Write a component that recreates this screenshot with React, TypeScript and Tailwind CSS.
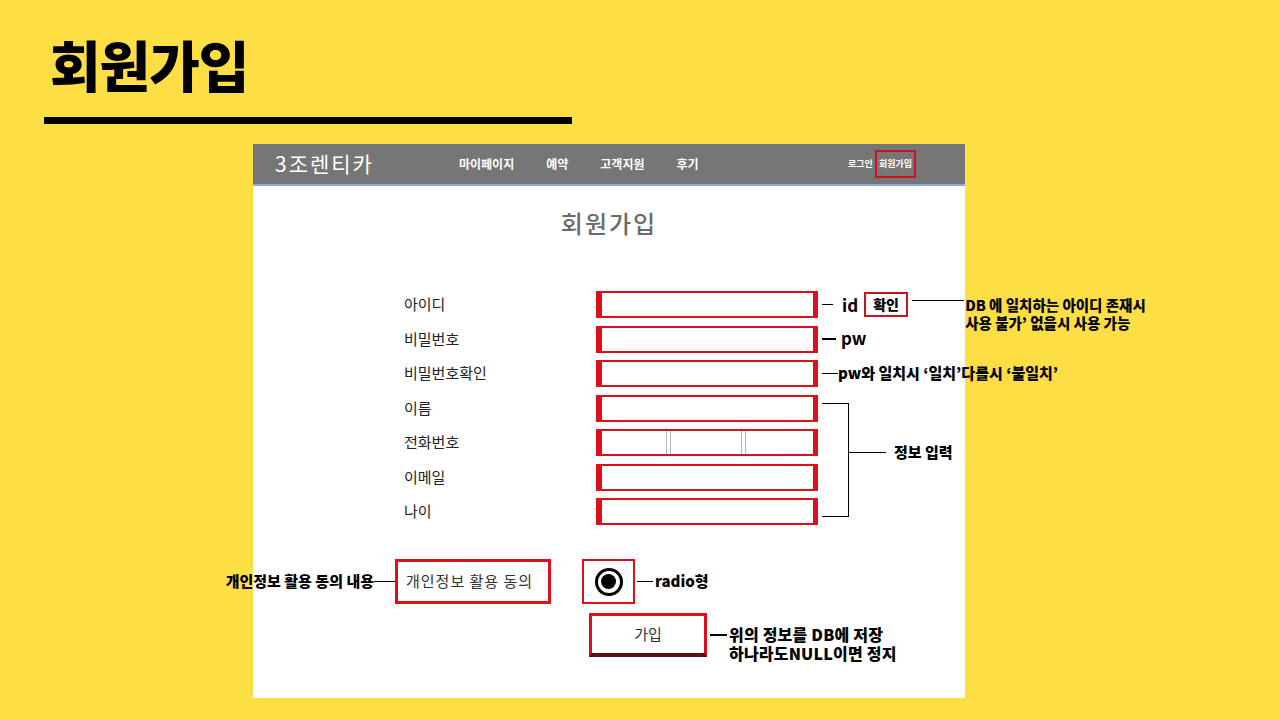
import React from 'react';

const KR = "font-['Noto_Sans_CJK_KR','Noto_Sans',sans-serif]";

function Field({ phone }: { phone?: boolean }) {
  return (
    <div className="flex h-[27px] w-[222px] shrink-0 border-2 border-l-[6px] border-r-[5px] border-[#dc0f1a] bg-white">
      {phone && (
        <>
          <div className="w-[64px]" />
          <div className="h-full w-[5px] border-x border-[#b5b5b5]" />
          <div className="w-[70px]" />
          <div className="h-full w-[5px] border-x border-[#b5b5b5]" />
        </>
      )}
    </div>
  );
}

// label + field, with whatever note hangs off its right edge
function Row({ label, phone, children }: { label: string; phone?: boolean; children?: React.ReactNode }) {
  return (
    <div className="flex h-[27px] w-max items-center whitespace-nowrap">
      <span className="w-[192px] shrink-0 text-[15px] text-[#222]">{label}</span>
      <Field phone={phone} />
      {children}
    </div>
  );
}

const Dash = ({ w }: { w: string }) => <div className={`h-[1.5px] shrink-0 bg-black ${w}`} />;

export default function App() {
  return (
    <div className={`h-[720px] w-[1280px] overflow-hidden bg-[#fddf45] ${KR}`}>
      {/* slide title */}
      <h1 className="pl-[50px] pt-[31px] text-[55px] font-black leading-[64px] tracking-[-1px] text-black">
        회원가입
      </h1>
      <div className="ml-[44px] mt-[22px] h-[7px] w-[528px] bg-black" />

      {/* screenshot panel */}
      <div className="ml-[253px] mt-[20px] h-[554px] w-[712px] bg-white">
        <div className="flex h-[42px] items-center border-b-2 border-[#8ea5dd] bg-[#767676] text-white">
          <div className="w-[184px] pl-[22px] text-[21px] tracking-[2px]">3조렌티카</div>
          <nav className="ml-[22px] flex gap-[32px] text-[12px] font-bold">
            <span>마이페이지</span>
            <span>예약</span>
            <span>고객지원</span>
            <span>후기</span>
          </nav>
          <div className="ml-auto mr-[49px] flex items-center gap-[2px] text-[9px] font-bold">
            <span>로그인</span>
            <span className="border-2 border-[#c8141e] px-[2px] py-[5px]">회원가입</span>
          </div>
        </div>

        <h2 className="mt-[21px] text-center text-[24px] font-medium leading-[32px] tracking-[2px] text-[#6b6b6b]">
          회원가입
        </h2>

        <div className="ml-[151px] mt-[52px] flex flex-col gap-[7.5px]">
          <Row label="아이디">
            <Dash w="ml-[4px] w-[11px]" />
            <span className="ml-[9px] shrink-0 text-[17px] font-bold">id</span>
            <span className="ml-[6px] flex h-[25px] w-[44px] shrink-0 items-center justify-center border-2 border-[#c8141e] text-[14px] font-black">
              확인
            </span>
            <Dash w="mb-[8px] ml-[4px] w-[52px]" />
            <div className="ml-[1px] mt-[18px] shrink-0 text-[14.5px] font-black leading-[18px]">
              <div>DB 에 일치하는 아이디 존재시</div>
              <div>사용 불가’ 없을시 사용 가능</div>
            </div>
          </Row>
          <Row label="비밀번호">
            <Dash w="ml-[4px] w-[14px]" />
            <span className="mb-[2px] ml-[5px] text-[17px] font-bold">pw</span>
          </Row>
          <Row label="비밀번호확인">
            <Dash w="ml-[4px] w-[16px]" />
            <span className="text-[15px] font-black">pw와 일치시 ‘일치’다를시 ‘불일치’</span>
          </Row>

          <div className="flex items-stretch">
            <div className="flex flex-col gap-[7.5px]">
              <Row label="이름" />
              <Row label="전화번호" phone />
              <Row label="이메일" />
              <Row label="나이" />
            </div>
            <div className="my-[8px] ml-[4px] w-[27px] border-y-[1.5px] border-r-[1.5px] border-black" />
            <div className="flex items-center pb-[15px]">
              <Dash w="w-[37px]" />
              <span className="ml-[8px] whitespace-nowrap text-[15px] font-black">정보 입력</span>
            </div>
          </div>
        </div>

        <div className="ml-[-29px] mt-[34px] flex items-center whitespace-nowrap">
          <div className="flex w-[150px] justify-end text-[15px] font-black">개인정보 활용 동의 내용</div>
          <Dash w="w-[21px]" />
          <div className="flex h-[45px] w-[156px] items-center border-[3px] border-[#dc0f1a] pl-[8px] text-[15px] tracking-[1px] text-[#333]">
            개인정보 활용 동의
          </div>
          <div className="ml-[31px] flex h-[45px] w-[53px] items-center justify-center border-2 border-[#dc0f1a]">
            <div className="flex h-[28px] w-[28px] items-center justify-center rounded-full border-[3px] border-black">
              <div className="h-[15px] w-[15px] rounded-full bg-black" />
            </div>
          </div>
          <Dash w="ml-[2px] w-[16px]" />
          <span className="ml-[2px] text-[15px] font-black">radio형</span>
        </div>

        <div className="ml-[336px] mt-[9px] flex items-start whitespace-nowrap">
          <div className="flex h-[44px] w-[118px] items-center justify-center border-[3px] border-b-[4px] border-[#dc0f1a] border-b-[#5a1014] text-[15px] text-[#333]">
            가입
          </div>
          <Dash w="ml-[3px] mt-[21px] w-[17px]" />
          <div className="ml-[2px] mt-[12px] text-[16px] font-black leading-[19px] tracking-[0.2px]">
            <div>위의 정보를 DB에 저장</div>
            <div>하나라도NULL이면 정지</div>
          </div>
        </div>
      </div>
    </div>
  );
}
